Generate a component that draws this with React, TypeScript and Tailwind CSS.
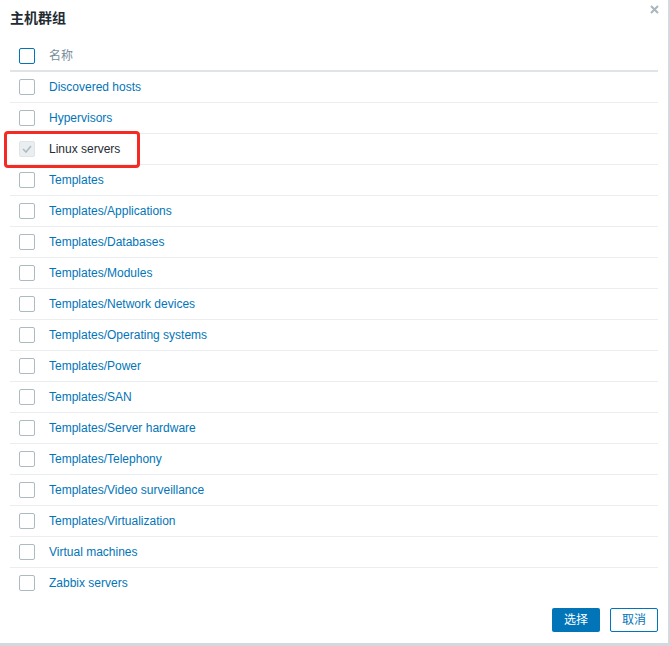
import React from 'react';

const groups = [
  'Discovered hosts',
  'Hypervisors',
  'Linux servers',
  'Templates',
  'Templates/Applications',
  'Templates/Databases',
  'Templates/Modules',
  'Templates/Network devices',
  'Templates/Operating systems',
  'Templates/Power',
  'Templates/SAN',
  'Templates/Server hardware',
  'Templates/Telephony',
  'Templates/Video surveillance',
  'Templates/Virtualization',
  'Virtual machines',
  'Zabbix servers',
];

const font = { fontFamily: '"Liberation Sans", Arial, "Noto Sans CJK SC", sans-serif' };

function Checkbox({ disabled, header }: { disabled?: boolean; header?: boolean }) {
  if (disabled) {
    return (
      <span className="flex h-4 w-4 items-center justify-center rounded-[2px] border border-[#dfe4e7] bg-[#ebeef0]">
        <svg width="10" height="8" viewBox="0 0 10 8">
          <path d="M1 4l3 3 5-6" fill="none" stroke="#acbbc2" strokeWidth="1.6" />
        </svg>
      </span>
    );
  }
  return (
    <span
      className={`block h-4 w-4 rounded-[2px] border bg-white ${
        header ? 'border-[#0275b8]' : 'border-[#acbbc2]'
      }`}
    />
  );
}

export default function App() {
  return (
    <div className="h-[646px] w-[670px] bg-[#d3dadd]" style={font}>
      <div className="relative flex h-[643px] w-[668px] flex-col bg-white">
        <button type="button" className="absolute right-[9px] top-[5px] p-0">
          <svg width="9" height="9" viewBox="0 0 9 9">
            <path d="M1 1l7 7M8 1l-7 7" stroke="#a9b6bc" strokeWidth="2" />
          </svg>
        </button>

        <h1 className="h-[41px] pl-[10px] pt-[10px] text-[14px] font-bold leading-[16px] text-[#1f2c33]">
          主机群组
        </h1>

        <div className="mx-[10px] text-[12px]">
          <div className="flex h-[31px] items-center border-b-2 border-[#dfe4e7]">
            <span className="w-[39px] pl-[9px]">
              <Checkbox header />
            </span>
            <span className="text-[#768d99]">名称</span>
          </div>
          {groups.map((g, i) => {
            const disabled = g === 'Linux servers';
            const last = i === groups.length - 1;
            return (
              <div
                key={g}
                className={`flex items-center ${last ? 'h-[30px]' : 'h-[31px] border-b border-[#ebeef0]'}`}
              >
                <span className="w-[39px] pl-[9px]">
                  <Checkbox disabled={disabled} />
                </span>
                <span className={disabled ? 'text-[#1f2c33]' : 'text-[#0275b8]'}>{g}</span>
              </div>
            );
          })}
        </div>

        <div className="mt-[10px] flex justify-end gap-[10px] pr-[10px]">
          <button
            type="button"
            className="h-[24px] w-[48px] rounded-[2px] bg-[#0275b8] text-[12px] text-white"
          >
            选择
          </button>
          <button
            type="button"
            className="h-[24px] w-[48px] rounded-[2px] border border-[#0275b8] bg-white text-[12px] text-[#0275b8]"
          >
            取消
          </button>
        </div>

        <div className="pointer-events-none absolute left-[4px] top-[131px] h-[37px] w-[136px] rounded-[4px] border-[3px] border-[#f52a22]" />
      </div>
    </div>
  );
}
